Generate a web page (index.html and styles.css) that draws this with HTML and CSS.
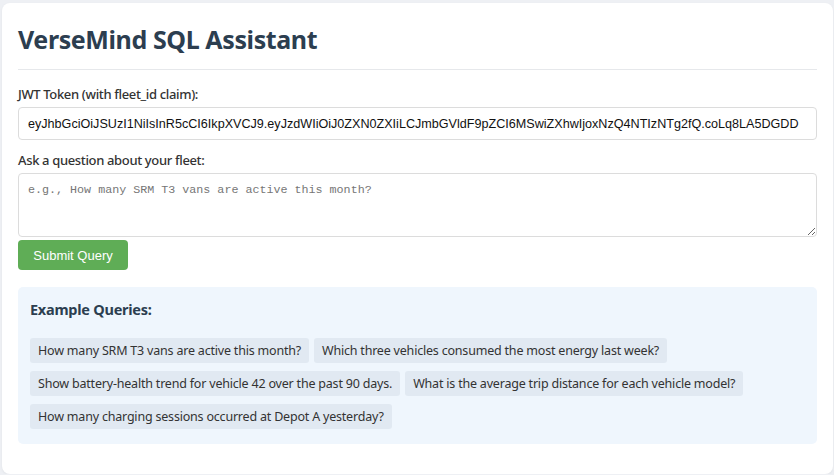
FILE: index.html
```html
<!DOCTYPE html>
<html lang="en">
<head>
<meta charset="utf-8">
<title>VerseMind SQL Assistant</title>
<link rel="stylesheet" href="styles.css">
</head>
<body>
<div class="card">
  <h1 class="title">VerseMind SQL Assistant</h1>
  <div class="field field-jwt">
    <label class="label" for="jwt">JWT Token (with fleet_id claim):</label>
    <input id="jwt" class="input" type="text" value="eyJhbGciOiJSUzI1NiIsInR5cCI6IkpXVCJ9.eyJzdWIiOiJ0ZXN0ZXIiLCJmbGVldF9pZCI6MSwiZXhwIjoxNzQ4NTIzNTg2fQ.coLq8LA5DGDD">
  </div>
  <div class="field field-question">
    <label class="label" for="q">Ask a question about your fleet:</label>
    <textarea id="q" class="textarea" placeholder="e.g., How many SRM T3 vans are active this month?"></textarea>
  </div>
  <button class="submit" type="button">Submit Query</button>
  <div class="examples">
    <h3 class="examples-title">Example Queries:</h3>
    <div class="chips">
      <span class="chip">How many SRM T3 vans are active this month?</span>
      <span class="chip">Which three vehicles consumed the most energy last week?</span>
      <span class="chip">Show battery-health trend for vehicle 42 over the past 90 days.</span>
      <span class="chip">What is the average trip distance for each vehicle model?</span>
      <span class="chip">How many charging sessions occurred at Depot A yesterday?</span>
    </div>
  </div>
</div>
</body>
</html>
```

FILE: styles.css
```css
html, body {
  margin: 0;
  padding: 0;
}
body {
  background: #eef0f4;
  font-family: "Noto Sans", "Open Sans", sans-serif;
  color: #333;
  overflow: hidden;
}
.card {
  background: #fff;
  margin: 3px 1px 0 2px;
  border-radius: 8px;
  padding: 16px 16px 30px 16px;
  box-shadow: 0 1px 3px rgba(0,0,0,0.05);
}
.title {
  margin: 0;
  font-size: 25px;
  letter-spacing: -0.4px;
  font-weight: 700;
  color: #2c3e50;
  line-height: 40px;
  padding: 0 0 10px 0;
  border-bottom: 1px solid #e6e8eb;
}
.field {
  display: flex;
  flex-direction: column;
}
.field-jwt {
  margin-top: 15px;
}
.field-question {
  margin-top: 11px;
}
.label {
  font-size: 13px;
  letter-spacing: -0.35px;
  font-weight: 500;
  color: #333;
  margin-bottom: 4px;
  line-height: 18px;
}
.input {
  box-sizing: border-box;
  height: 33px;
  padding: 0 9px;
  border: 1px solid #dcdcdc;
  border-radius: 4px;
  font-family: "Liberation Sans", Arial, sans-serif;
  font-size: 12.6px;
  color: #111;
  outline: none;
}
.textarea {
  box-sizing: border-box;
  height: 64px;
  padding: 9px 9px;
  border: 1px solid #dcdcdc;
  border-radius: 4px;
  font-family: "Liberation Mono", monospace;
  font-size: 11.7px;
  resize: vertical;
  outline: none;
}
.textarea::placeholder {
  color: #767676;
}
.submit {
  margin-top: 3px;
  height: 30px;
  width: 110px;
  background: #5fad56;
  color: #fff;
  border: none;
  border-radius: 4px;
  font-family: "Liberation Sans", Arial, sans-serif;
  font-size: 13px;
  padding: 0;
}
.examples {
  margin-top: 17px;
  background: #eff6fd;
  border-radius: 5px;
  padding: 12px 12px 15px 12px;
}
.examples-title {
  margin: 0;
  font-size: 14.5px;
  letter-spacing: -0.25px;
  font-weight: 700;
  color: #2c3e50;
  line-height: 20px;
  padding-bottom: 19px;
}
.chips {
  display: flex;
  flex-wrap: wrap;
  gap: 8px 5px;
}
.chip {
  background: #e1e9f2;
  border-radius: 3px;
  padding: 0 8px;
  height: 25px;
  line-height: 25px;
  font-size: 12.5px;
  letter-spacing: -0.2px;
  color: #333;
}
```
